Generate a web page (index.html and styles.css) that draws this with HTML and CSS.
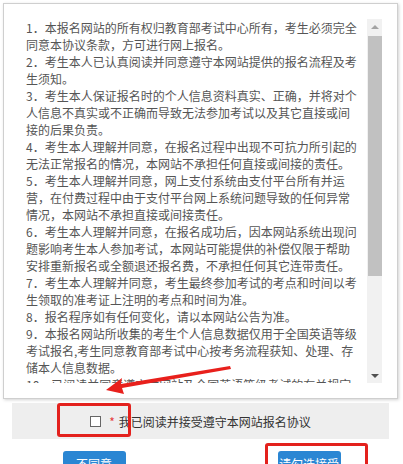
FILE: index.html
```html
<!DOCTYPE html>
<html lang="zh-CN">
<head>
<meta charset="utf-8">
<title>报名协议</title>
<link rel="stylesheet" href="styles.css">
</head>
<body>
<div class="page">
  <div class="agreement">
    <div class="scroll">
      <div class="text">
        <p>1．本报名网站的所有权归教育部考试中心所有，考生必须完全同意本协议条款，方可进行网上报名。</p>
        <p>2．考生本人已认真阅读并同意遵守本网站提供的报名流程及考生须知。</p>
        <p>3．考生本人保证报名时的个人信息资料真实、正确，并将对个人信息不真实或不正确而导致无法参加考试以及其它直接或间接的后果负责。</p>
        <p>4．考生本人理解并同意，在报名过程中出现不可抗力所引起的无法正常报名的情况，本网站不承担任何直接或间接的责任。</p>
        <p>5．考生本人理解并同意，网上支付系统由支付平台所有并运营，在付费过程中由于支付平台网上系统问题导致的任何异常情况，本网站不承担直接或间接责任。</p>
        <p>6．考生本人理解并同意，在报名成功后，因本网站系统出现问题影响考生本人参加考试，本网站可能提供的补偿仅限于帮助安排重新报名或全额退还报名费，不承担任何其它连带责任。</p>
        <p>7．考生本人理解并同意，考生最终参加考试的考点和时间以考生领取的准考证上注明的考点和时间为准。</p>
        <p>8．报名程序如有任何变化，请以本网站公告为准。</p>
        <p>9．本报名网站所收集的考生个人信息数据仅用于全国英语等级考试报名,考生同意教育部考试中心按考务流程获知、处理、存储本人信息数据。</p>
        <p>10．已阅读并同意遵守本网站及全国英语等级考试的有关规定和要求。</p>
      </div>
      <div class="scrollbar">
        <div class="sb-btn"><span class="tri-up"></span></div>
        <div class="sb-track"><div class="sb-thumb"></div></div>
        <div class="sb-btn"><span class="tri-down"></span></div>
      </div>
    </div>
  </div>
  <div class="confirm">
    <label class="agree"><input type="checkbox" class="check"><span class="star">*</span><span class="label">我已阅读并接受遵守本网站报名协议</span></label>
  </div>
  <div class="actions">
    <button class="btn">不同意</button>
    <button class="btn">请勾选接受</button>
  </div>
  <svg class="arrow" width="140" height="30" viewBox="0 0 140 30">
    <path d="M2 26 L18 14 L17 20 L126 2 L127 5 L18 24 L20 30 Z" fill="#e8201c"/>
  </svg>
  <div class="mark mark-check"></div>
  <div class="mark mark-accept"></div>
</div>
</body>
</html>
```
FILE: styles.css
```css
html, body {
  margin: 0;
  padding: 0;
  background: #fff;
}
body {
  font-family: "Noto Sans CJK SC", "Microsoft YaHei", sans-serif;
}
.page {
  position: relative;
  width: 403px;
  height: 464px;
  overflow: hidden;
  padding-top: 3px;
  box-sizing: border-box;
}
.agreement {
  margin-left: 3px;
  width: 395px;
  box-sizing: border-box;
  border: 1px solid #cfcfcf;
  padding: 15px;
  background: #fff;
  box-shadow: 1px 1px 3px rgba(0, 0, 0, 0.18);
}
.scroll {
  display: flex;
  height: 364px;
  overflow: hidden;
}
.text {
  width: 348px;
  box-sizing: border-box;
  padding: 0 8px 0 7px;
  font-size: 12px;
  line-height: 17px;
  color: #555;
}
.text p {
  margin: 0;
}
.scrollbar {
  width: 15px;
  display: flex;
  flex-direction: column;
  background: #f1f1f1;
}
.sb-btn {
  height: 15px;
  display: flex;
  align-items: center;
  justify-content: center;
}
.tri-up {
  width: 0;
  height: 0;
  border-left: 4px solid transparent;
  border-right: 4px solid transparent;
  border-bottom: 4px solid #a3a3a3;
}
.tri-down {
  width: 0;
  height: 0;
  border-left: 4px solid transparent;
  border-right: 4px solid transparent;
  border-top: 4px solid #505050;
}
.sb-track {
  flex: 1;
  padding: 2px 0 0 1px;
}
.sb-thumb {
  height: 240px;
  width: 14px;
  background: #c1c1c1;
}
.confirm {
  margin: 4px 0 0 12px;
  width: 377px;
  height: 36px;
  background: #eeeeee;
  display: flex;
  align-items: center;
  justify-content: center;
}
.agree {
  display: flex;
  align-items: center;
  font-size: 12px;
  color: #333;
}
.check {
  appearance: none;
  -webkit-appearance: none;
  margin: 0 8px 0 0;
  width: 11px;
  height: 11px;
  border: 1px solid #666;
  background: #fff;
  box-sizing: border-box;
}
.star {
  color: #e53b3b;
  margin-right: 4px;
  font-size: 12px;
}
.label {
  color: #333;
}
.actions {
  margin-top: 12px;
  display: flex;
  justify-content: center;
  gap: 152px;
  padding-right: 0;
}
.btn {
  width: 63px;
  height: 26px;
  padding: 0;
  border: none;
  border-radius: 3px;
  background: #2a86d3;
  color: #fff;
  font-family: "Noto Sans CJK SC", sans-serif;
  font-size: 12px;
  line-height: 24px;
}
.arrow {
  position: absolute;
  left: 104px;
  top: 364px;
}
.mark {
  position: absolute;
  border: 3px solid #e3211d;
  border-radius: 3px;
  box-sizing: border-box;
}
.mark-check {
  left: 57px;
  top: 403px;
  width: 74px;
  height: 34px;
}
.mark-accept {
  left: 265px;
  top: 443px;
  width: 103px;
  height: 30px;
}
```
